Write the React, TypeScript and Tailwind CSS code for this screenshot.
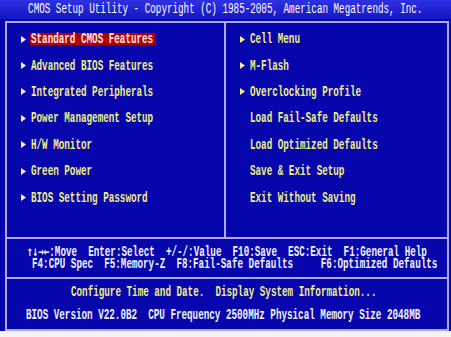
import type { ReactNode } from 'react';
import clsx from 'clsx';

const leftItems = [
  { label: 'Standard CMOS Features', arrow: true, active: true },
  { label: 'Advanced BIOS Features', arrow: true },
  { label: 'Integrated Peripherals', arrow: true },
  { label: 'Power Management Setup', arrow: true },
  { label: 'H/W Monitor', arrow: true },
  { label: 'Green Power', arrow: true },
  { label: 'BIOS Setting Password', arrow: true },
];

const rightItems = [
  { label: 'Cell Menu', arrow: true },
  { label: 'M-Flash', arrow: true },
  { label: 'Overclocking Profile', arrow: true },
  { label: 'Load Fail-Safe Defaults', arrow: false },
  { label: 'Load Optimized Defaults', arrow: false },
  { label: 'Save & Exit Setup', arrow: false },
  { label: 'Exit Without Saving', arrow: false },
];

// bios font is a tall narrow 8x16 cell, squeeze a mono font to match
function T({ children, className, center }: { children: ReactNode; className?: string; center?: boolean }) {
  return (
    <span
      className={clsx(
        'inline-block shrink-0 whitespace-pre scale-x-[0.661]',
        center ? 'origin-center' : 'origin-left',
        className,
      )}
    >
      {children}
    </span>
  );
}

function Arrow({ color }: { color: string }) {
  return (
    <span className="flex w-[11px] shrink-0 items-center pl-[1px]">
      <svg width="5" height="7" viewBox="0 0 5 7" aria-hidden="true">
        <polygon points="0,0 5,3.5 0,7" fill={color} />
      </svg>
    </span>
  );
}

type Item = { label: string; arrow: boolean; active?: boolean };

function MenuColumn({ items, arrowColor, indent }: { items: Item[]; arrowColor: string; indent: string }) {
  return (
    <ul className={clsx('flex flex-col pt-[3px]', indent)}>
      {items.map((item) => (
        <li key={item.label} className="flex h-[26.4px] items-center">
          {item.arrow ? <Arrow color={item.active ? '#ffffff' : arrowColor} /> : <span className="w-[11px] shrink-0" />}
          <T
            className={clsx(
              'font-bold leading-[12px]',
              item.active ? 'bg-[#b40000] pl-[1.5px] pr-[4px] -ml-[1.5px] text-[#ffe6e6]' : 'text-[#f0ee84]',
            )}
          >
            {item.label}
          </T>
        </li>
      ))}
    </ul>
  );
}

export default function App() {
  return (
    <div
      className="flex h-[337px] w-[451px] flex-col overflow-hidden bg-[#0606ac] text-[14px]"
      style={{ fontFamily: '"Liberation Mono", "DejaVu Sans Mono", monospace' }}
    >
      <header className="flex h-[19px] shrink-0 items-center justify-center bg-gradient-to-b from-[#3030e4] to-[#1414c4] text-white">
        <T center className="leading-[13px]">
          CMOS Setup Utility - Copyright (C) 1985-2005, American Megatrends, Inc.
        </T>
      </header>

      <main className="ml-[5px] mr-[2px] mt-[2px] flex h-[310px] shrink-0 flex-col border-2 border-[#aaaaf8]">
        <div className="grid h-[216px] shrink-0 grid-cols-[219px_1fr] border-b-2 border-[#aaaaf8]">
          <div className="border-r-2 border-[#aaaaf8]">
            <MenuColumn items={leftItems} arrowColor="#f4f4f4" indent="pl-[13px]" />
          </div>
          <MenuColumn items={rightItems} arrowColor="#f0ee84" indent="pl-[12.5px]" />
        </div>

        <div className="flex h-[40px] shrink-0 flex-col justify-center border-b-2 border-[#aaaaf8] font-bold leading-[13.3px] text-[#f2f2ff]">
          <div className="h-[13.3px] pl-[19.7px]">
            <T>
              <span className="font-['DejaVu_Sans_Mono']">↑↓→←</span>
              {':Move  Enter:Select  +/-/:Value  F10:Save  ESC:Exit  F1:General Help'}
            </T>
          </div>
          <div className="h-[13.3px] pl-[24.7px]">
            <T>{'F4:CPU Spec  F5:Memory-Z  F8:Fail-Safe Defaults     F6:Optimized Defaults'}</T>
          </div>
        </div>

        <div className="flex flex-1 flex-col gap-[10px] pt-[6.5px] font-bold leading-[13px]">
          <div className="pl-[63.7px] text-[#f0ee84]">
            <T>{'Configure Time and Date.  Display System Information...'}</T>
          </div>
          <div className="pl-[19px] text-[#f2f2ff]">
            <T>{'BIOS Version V22.0B2  CPU Frequency 2500MHz Physical Memory Size 2048MB'}</T>
          </div>
        </div>
      </main>

      <div className="flex-1 bg-[#f4f4f8]" />
    </div>
  );
}
